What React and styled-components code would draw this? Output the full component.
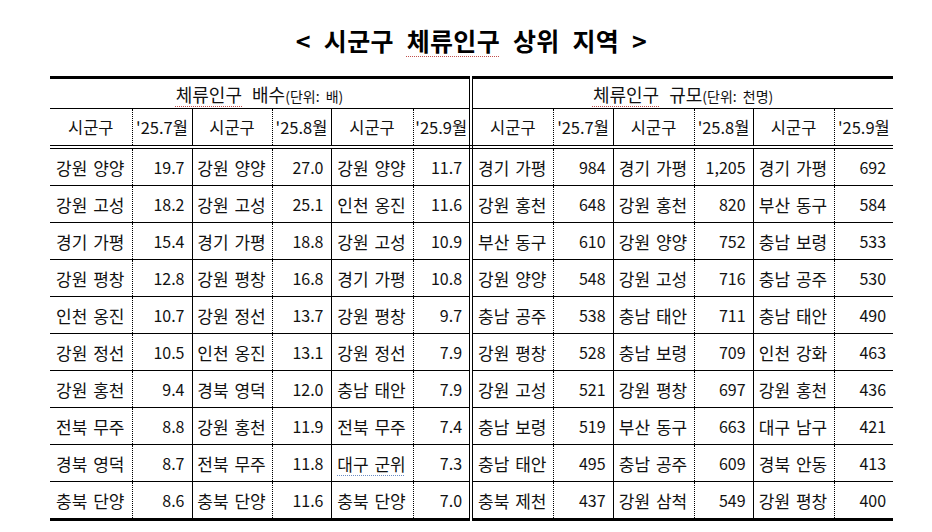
import React from "react";
import styled, { createGlobalStyle } from "styled-components";

const GlobalStyle = createGlobalStyle`
  html, body { margin: 0; padding: 0; background: #fff; }
  body { font-family: "Noto Sans CJK KR", "Noto Sans", sans-serif; color: #111; }
`;

const Page = styled.div`
  width: 843px;
  padding: 21px 0 0 50px;
`;

const Title = styled.h1`
  margin: 0 0 17px 0;
  text-align: center;
  font-size: 25px;
  font-weight: 700;
  line-height: 38px;
  word-spacing: 7px;
  letter-spacing: 0.3px;
  color: #000;
`;

const Spell = styled.span`
  text-decoration: underline dotted ${(p) => p.$color || "#c0504d"};
  text-decoration-thickness: 1px;
  text-underline-offset: ${(p) => p.$offset || 4}px;
`;

const Table = styled.table`
  border-collapse: collapse;
  table-layout: fixed;
  width: 843px;
  border-top: 3px solid #000;
  border-bottom: 3px solid #000;
`;

const borderFor = (s) =>
  s === "dot"
    ? "1px dotted #000"
    : s === "solid"
    ? "1px solid #000"
    : s === "double"
    ? "4px double #000"
    : "none";

const GroupCell = styled.th`
  height: 29px;
  padding: 0;
  font-weight: 400;
  font-size: 18px;
  word-spacing: 6px;
  text-align: center;
  border-bottom: 1px solid #000;
  border-right: ${(p) => borderFor(p.$sep)};
  white-space: nowrap;
`;

const Unit = styled.span`
  font-size: 14px;
  word-spacing: 3px;
`;

const HeadCell = styled.th`
  height: 36px;
  padding: 0;
  font-weight: 400;
  font-size: 16.5px;
  text-align: center;
  border-bottom: 4px double #000;
  border-right: ${(p) => borderFor(p.$sep)};
  white-space: nowrap;
`;

const Cell = styled.td`
  height: 36px;
  padding: ${(p) => (p.$num ? "0 7px 0 0" : "0 1px 0 0")};
  font-size: ${(p) => (p.$num ? "16px" : "17px")};
  text-align: ${(p) => (p.$num ? "right" : "center")};
  border-bottom: 1px solid #000;
  border-right: ${(p) => borderFor(p.$sep)};
  white-space: nowrap;
  word-spacing: 2px;
`;

const widths = [82, 60, 80, 59, 82, 58, 82, 60, 81, 59, 81, 59];

const rows = [
  ["강원 양양", "19.7", "강원 양양", "27.0", "강원 양양", "11.7", "경기 가평", "984", "경기 가평", "1,205", "경기 가평", "692"],
  ["강원 고성", "18.2", "강원 고성", "25.1", "인천 옹진", "11.6", "강원 홍천", "648", "강원 홍천", "820", "부산 동구", "584"],
  ["경기 가평", "15.4", "경기 가평", "18.8", "강원 고성", "10.9", "부산 동구", "610", "강원 양양", "752", "충남 보령", "533"],
  ["강원 평창", "12.8", "강원 평창", "16.8", "경기 가평", "10.8", "강원 양양", "548", "강원 고성", "716", "충남 공주", "530"],
  ["인천 옹진", "10.7", "강원 정선", "13.7", "강원 평창", "9.7", "충남 공주", "538", "충남 태안", "711", "충남 태안", "490"],
  ["강원 정선", "10.5", "인천 옹진", "13.1", "강원 정선", "7.9", "강원 평창", "528", "충남 보령", "709", "인천 강화", "463"],
  ["강원 홍천", "9.4", "경북 영덕", "12.0", "충남 태안", "7.9", "강원 고성", "521", "강원 평창", "697", "강원 홍천", "436"],
  ["전북 무주", "8.8", "강원 홍천", "11.9", "전북 무주", "7.4", "충남 보령", "519", "부산 동구", "663", "대구 남구", "421"],
  ["경북 영덕", "8.7", "전북 무주", "11.8", "대구 군위", "7.3", "충남 태안", "495", "충남 공주", "609", "경북 안동", "413"],
  ["충북 단양", "8.6", "충북 단양", "11.6", "충북 단양", "7.0", "충북 제천", "437", "강원 삼척", "549", "강원 평창", "400"],
];

const heads = ["시군구", "'25.7월", "시군구", "'25.8월", "시군구", "'25.9월"];

const sepFor = (i) => {
  if (i === 11) return "none";
  if (i === 5) return "double";
  return i % 2 === 0 ? "dot" : "solid";
};

export default function App() {
  return (
    <>
      <GlobalStyle />
      <Page>
        <Title>
          &lt; 시군구 <Spell $offset={5}>체류인구</Spell> 상위 지역 &gt;
        </Title>
        <Table>
          <colgroup>
            {widths.map((w, i) => (
              <col key={i} style={{ width: w }} />
            ))}
          </colgroup>
          <thead>
            <tr>
              <GroupCell colSpan={6} $sep="double">
                <Spell>체류인구</Spell> 배수<Unit>(단위: 배)</Unit>
              </GroupCell>
              <GroupCell colSpan={6} $sep="none">
                <Spell>체류인구</Spell> 규모<Unit>(단위: 천명)</Unit>
              </GroupCell>
            </tr>
            <tr>
              {[...heads, ...heads].map((h, i) => (
                <HeadCell key={i} $sep={sepFor(i)}>
                  {h}
                </HeadCell>
              ))}
            </tr>
          </thead>
          <tbody>
            {rows.map((r, ri) => (
              <tr key={ri}>
                {r.map((v, i) => (
                  <Cell key={i} $num={i % 2 === 1} $sep={sepFor(i)}>
                    {v === "대구 군위" ? (
                      <Spell $color="#6b8cc4">{v}</Spell>
                    ) : (
                      v
                    )}
                  </Cell>
                ))}
              </tr>
            ))}
          </tbody>
        </Table>
      </Page>
    </>
  );
}
